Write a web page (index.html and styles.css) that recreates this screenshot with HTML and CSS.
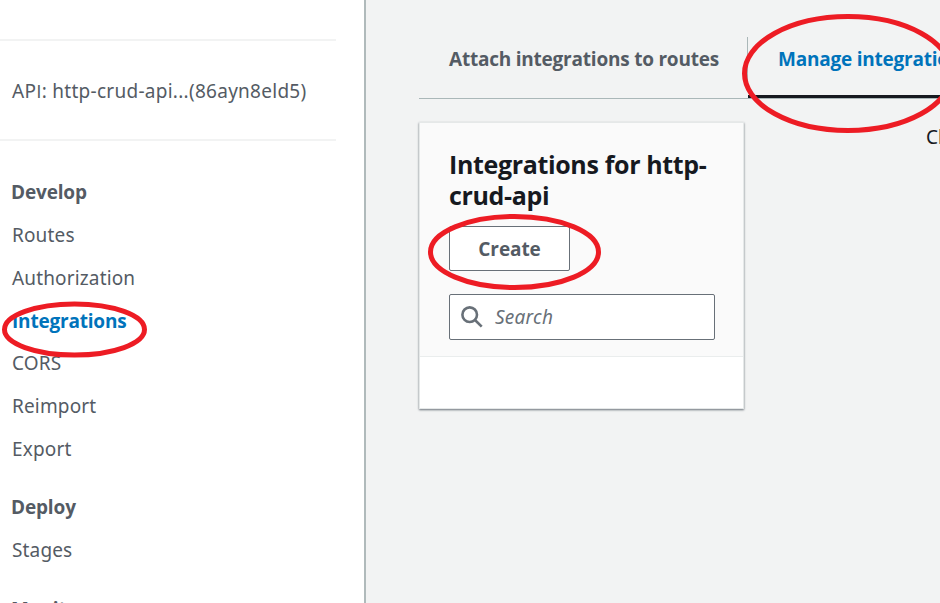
FILE: index.html
```
<!DOCTYPE html>
<html lang="en">
<head>
<meta charset="utf-8">
<title>Integrations</title>
<link rel="stylesheet" href="styles.css">
</head>
<body>
<div class="app">
  <nav class="sidebar">
    <div class="api">AP<span class="plain">I</span>: http-crud-api...(86ayn8eld5)</div>
    <h2 class="group">Develop</h2>
    <ul>
      <li>Routes</li><li>Authorization</li><li class="active">Integrations</li><li>CORS</li><li>Reimport</li><li>Export</li>
    </ul>
    <h2 class="group deploy">Deploy</h2>
    <ul><li>Stages</li></ul>
    <h2 class="group monitor">Monitor</h2>
  </nav>
  <main class="content">
    <div class="tabs">
      <div class="tab">Attach integrations to routes</div>
      <div class="tab selected">Manage integrations</div>
    </div>
    <div class="columns">
      <section class="card">
        <header class="card-head">
          <h1>Integrations for http-<br>crud-api</h1>
          <button class="create">Create</button>
          <div class="search">
            <svg width="22" height="22" viewBox="0 0 22 22"><circle cx="8.7" cy="8.7" r="7.3" /><path d="M14 14l6.700 6.700"/></svg>
            <span>Search</span>
          </div>
        </header>
      </section>
      <p class="hint">Choose an integration</p>
    </div>
  </main>
  <svg class="marks" width="940" height="603" viewBox="0 0 940 603">
    <ellipse cx="848" cy="73.500" rx="103.500" ry="57"/>
    <ellipse cx="514.500" cy="252" rx="84" ry="35.500"/>
    <ellipse cx="74.500" cy="329.500" rx="70" ry="25.500"/>
  </svg>
</div>
</body>
</html>
```
FILE: styles.css
```
* { box-sizing: border-box; }
body { margin: 0; overflow: hidden; font: 19px/26px "Noto Sans", sans-serif; color: #545b64; }
.app { position: relative; display: flex; width: 940px; height: 603px; overflow: hidden; }
.sidebar { width: 366px; flex: none; background: #fff; border-right: 2px solid #b0babb; overflow: hidden; padding-top: 39px; white-space: nowrap; }
.api { width: 336px; height: 102px; border: solid #f2f3f3; border-width: 2px 0; padding: 37px 0 0 12px; letter-spacing: 0.27px; }
.plain { font-family: "Open Sans", sans-serif; }
.group { margin: 38px 0 17.300px 11px; font: 700 19px/26px "Open Sans", sans-serif; letter-spacing: -0.15px; }
ul { list-style: none; margin: 0; padding: 0 0 0 12px; }
li { height: 42.700px; letter-spacing: 0.15px; }
.active { color: #0073bb; font-family: "Open Sans", sans-serif; font-weight: 700; letter-spacing: -0.2px; padding-top: 0.3px; }
.deploy { margin-top: 15.500px; }
.monitor { margin-top: 16px; }
.content { width: 574px; flex: none; background: #f2f3f3; overflow: hidden; padding: 37px 0 0 53px; white-space: nowrap; }
.tabs { display: flex; height: 62px; width: 600px; border-bottom: 1px solid #aab7b8; }
.tab { width: 329px; padding: 9px 0 0 30px; font-family: "Open Sans", sans-serif; font-weight: 700; border-right: 1px solid #aab7b8; height: 48px; letter-spacing: -0.22px; }
.selected { color: #0073bb; height: 61px; width: 271px; border-right: 0; border-bottom: 3px solid #16191f; }
.columns { display: flex; padding-top: 23px; }
.card { width: 325px; flex: none; height: 287px; background: #fff; border: 1px solid #e5e8e8; box-shadow: 0 1px 2px #687078; }
.card-head { height: 234px; background: #fafafa; border-bottom: 1px solid #eaeded; padding: 26px 0 0 29px; }
h1 { margin: 0; color: #16191f; font: 700 25px/31px "Open Sans", sans-serif; letter-spacing: -0.35px; }
.create { display: block; width: 121px; height: 45px; margin-top: 15px; padding: 0; background: #fff; border: 1px solid #687078; border-radius: 2px; font: 700 19px/26px "Open Sans", sans-serif; letter-spacing: -0.1px; color: #545b64; }
.search { display: flex; align-items: center; gap: 12px; width: 266px; height: 46px; margin-top: 23px; padding-left: 11px; background: #fff; border: 1px solid #687078; border-radius: 2px; font-style: italic; letter-spacing: 0.25px; color: #687078; }
.search svg { fill: none; stroke: #687078; stroke-width: 2.600; }
.hint { margin: 2px 0 0 182px; color: #16191f; }
.marks { position: absolute; inset: 0; fill: none; stroke: #ed1c24; stroke-width: 5; }
```
